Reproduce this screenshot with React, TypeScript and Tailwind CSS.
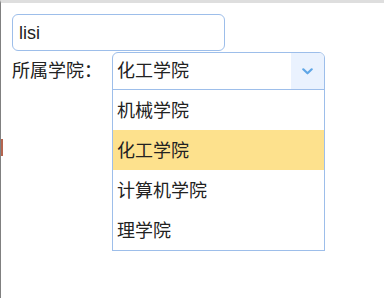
import { useState } from "react";

const colleges = ["机械学院", "化工学院", "计算机学院", "理学院"];

export default function App() {
  const [name, setName] = useState("lisi");
  const [selected, setSelected] = useState("化工学院");

  return (
    <div
      className="relative h-[298px] w-[384px] overflow-hidden border-t-[3px] border-l border-t-[#dedede] border-l-[#808080] bg-white text-[18px] text-[#222]"
      style={{ fontFamily: '"Liberation Sans", "Noto Sans CJK SC", sans-serif' }}
    >
      {/* stray edge mark */}
      <div className="absolute left-0 top-[136px] h-[17px] w-[2px] bg-[#b5654f]" />

      <div className="flex flex-col gap-[1px] pl-[11px] pt-[11px]">
        <input
          value={name}
          onChange={(e) => setName(e.target.value)}
          className="h-[37px] w-[213px] rounded-[6px] border border-[#9dbeea] px-[6px] pt-[1px] text-[18px] text-[#222] outline-none"
        />

        <div className="flex items-start">
          <span className="mt-[7px] w-[100px] leading-[24px]">所属学院：</span>

          <div className="flex w-[213px] flex-col">
            <div className="flex h-[38px] items-stretch overflow-hidden rounded-t-[6px] border border-[#9dbeea]">
              <div className="flex flex-1 items-center pl-[4px] pt-[1px]">{selected}</div>
              <div className="flex w-[33px] items-center justify-center bg-[#eaf2fe]">
                <svg width="11" height="7" viewBox="0 0 11 7" fill="none">
                  <path
                    d="M1.3 1.3 5.5 5.3l4.2-4"
                    stroke="#5fa6e6"
                    strokeWidth="2.2"
                    strokeLinecap="round"
                    strokeLinejoin="round"
                  />
                </svg>
              </div>
            </div>

            <ul className="-mt-px border border-[#9dbeea]">
              {colleges.map((c) => (
                <li
                  key={c}
                  onClick={() => setSelected(c)}
                  className={
                    c === selected
                      ? "flex h-[40px] items-center bg-[#fde18d] pl-[4px] pt-[2px]"
                      : "flex h-[40px] items-center pl-[4px] pt-[2px]"
                  }
                >
                  {c}
                </li>
              ))}
            </ul>
          </div>
        </div>
      </div>
    </div>
  );
}
